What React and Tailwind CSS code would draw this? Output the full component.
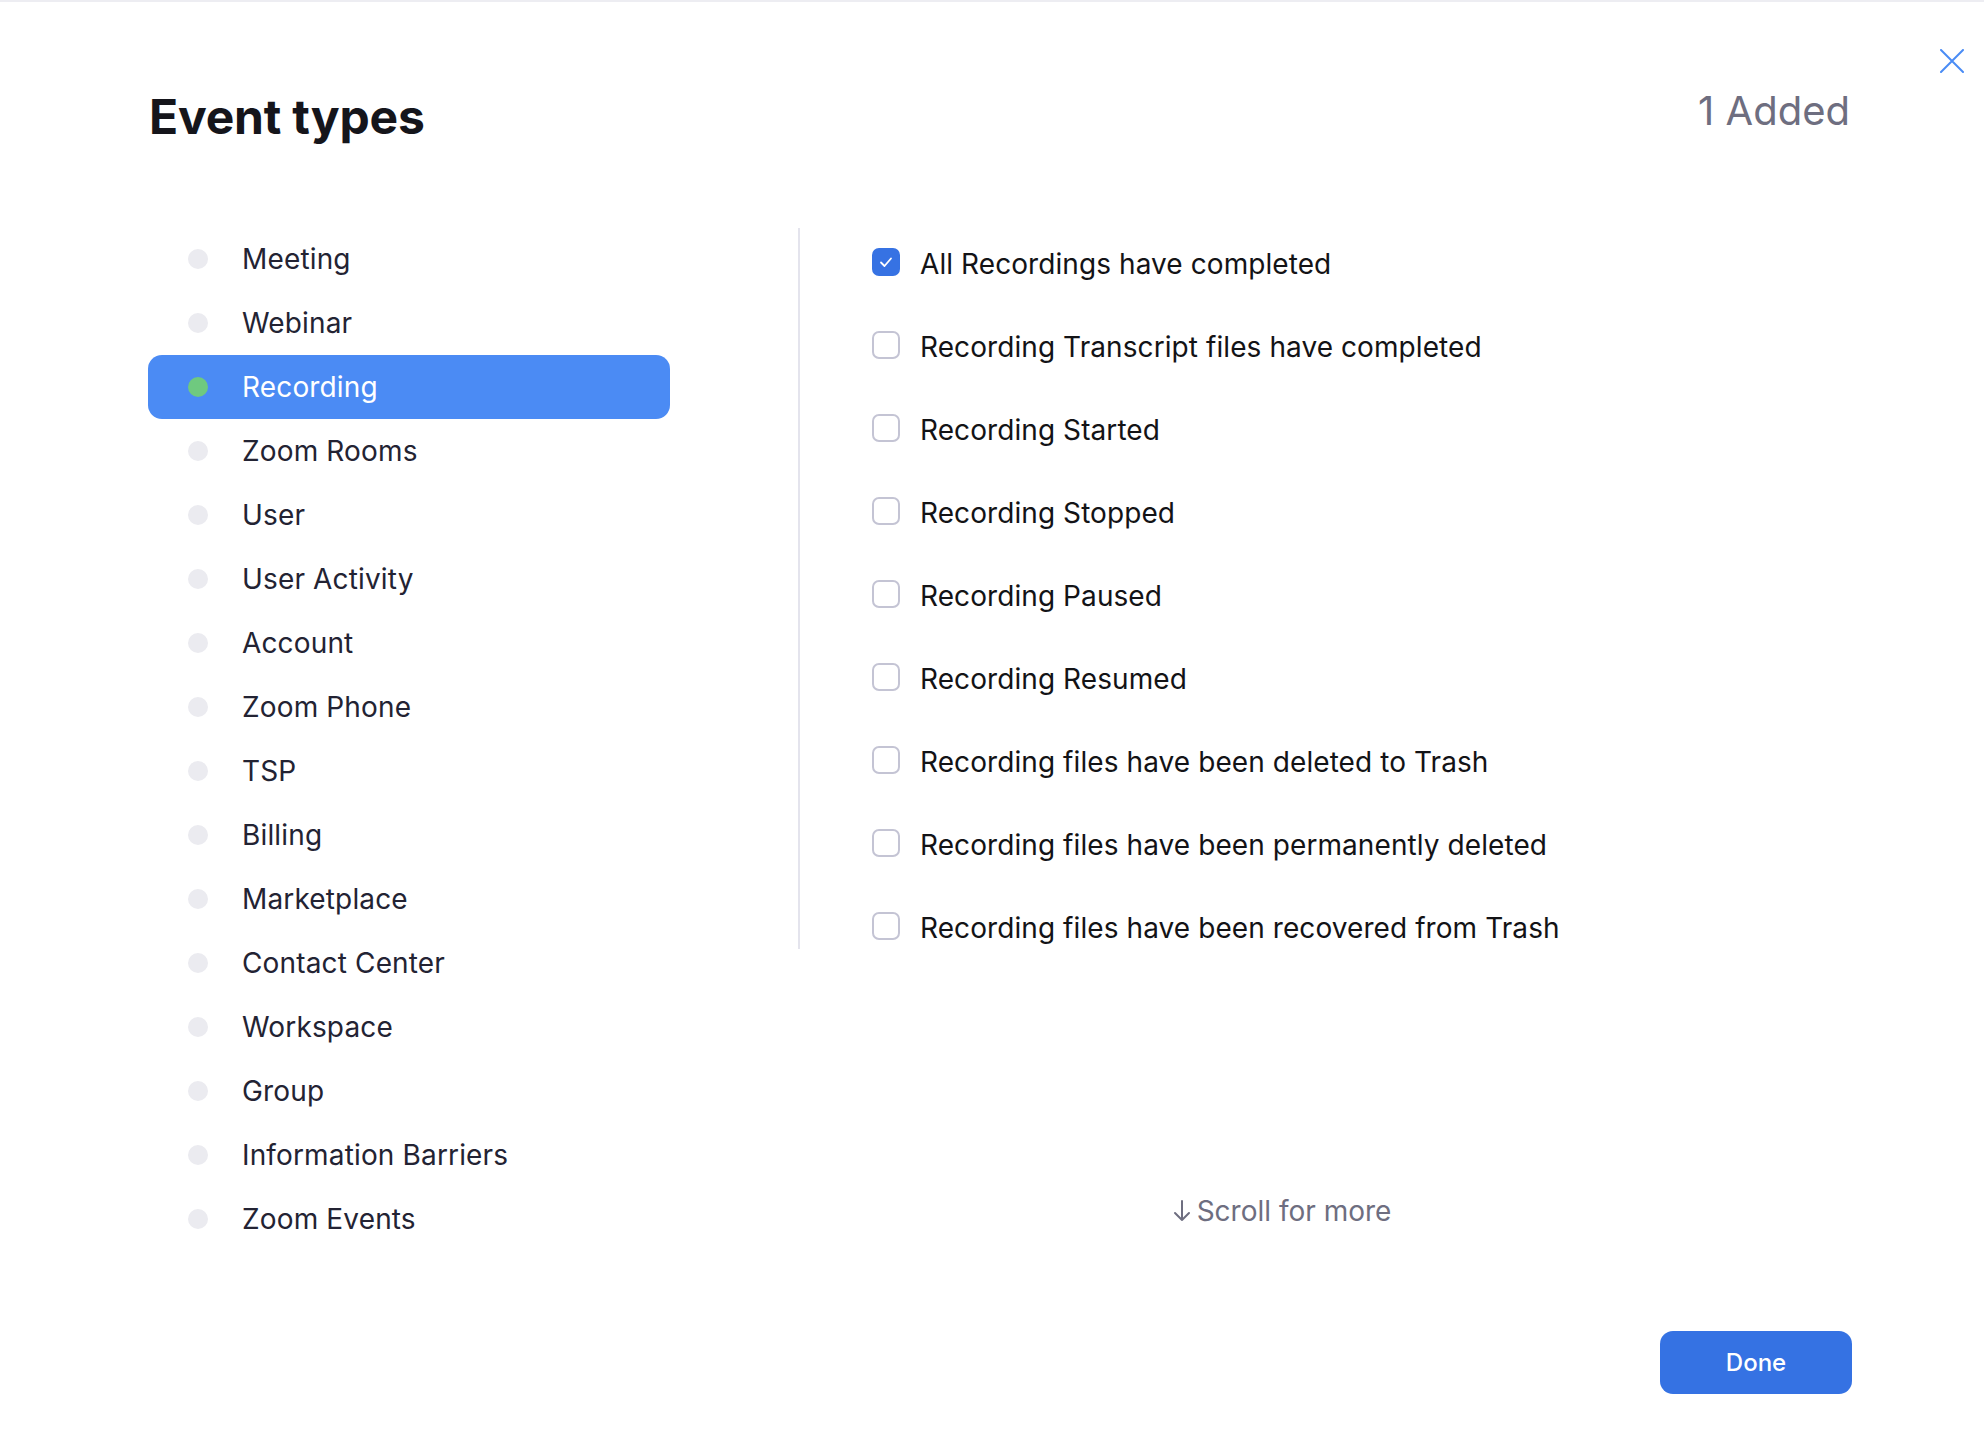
import { useState } from 'react';

const categories = [
  'Meeting',
  'Webinar',
  'Recording',
  'Zoom Rooms',
  'User',
  'User Activity',
  'Account',
  'Zoom Phone',
  'TSP',
  'Billing',
  'Marketplace',
  'Contact Center',
  'Workspace',
  'Group',
  'Information Barriers',
  'Zoom Events',
];

const recordingEvents = [
  'All Recordings have completed',
  'Recording Transcript files have completed',
  'Recording Started',
  'Recording Stopped',
  'Recording Paused',
  'Recording Resumed',
  'Recording files have been deleted to Trash',
  'Recording files have been permanently deleted',
  'Recording files have been recovered from Trash',
];

const Checkbox = ({ checked }) =>
  checked ? (
    <span className="w-[28px] h-[28px] rounded-[7px] bg-[#3672e3] flex items-center justify-center shrink-0">
      <svg width="16" height="16" viewBox="0 0 16 16" fill="none">
        <path d="M3 8.5L6.5 12L13 4.5" stroke="white" strokeWidth="1.8" strokeLinecap="round" strokeLinejoin="round" />
      </svg>
    </span>
  ) : (
    <span className="w-[28px] h-[28px] rounded-[7px] border-2 border-[#c4c4d4] bg-white shrink-0" />
  );

const App = () => {
  const [active, setActive] = useState('Recording');
  const [checked, setChecked] = useState({ 'All Recordings have completed': true });

  return (
    <div className="relative w-[1984px] h-[1430px] bg-white border-t-2 border-[#ededf2] font-[Inter,sans-serif] overflow-hidden">
      {/* close */}
      <button className="absolute top-[47px] left-[1940px] w-[24px] h-[24px]">
        <svg width="24" height="24" viewBox="0 0 24 24" fill="none">
          <path d="M1 1L23 23M23 1L1 23" stroke="#4a8cf5" strokeWidth="2" strokeLinecap="round" />
        </svg>
      </button>

      {/* header */}
      <div className="flex items-start justify-between pl-[149px] pr-[134px] pt-[90px]">
        <h1 className="text-[48px] leading-[48px] font-bold text-[#15151b] tracking-[-0.2px] mt-[1px]">Event types</h1>
        <span className="text-[40px] leading-[40px] text-[#6e6e80] mt-[-1px]">1 Added</span>
      </div>

      {/* body */}
      <div className="flex mt-[79px] pl-[148px]">
        <ul className="w-[522px] mt-[7px]">
          {categories.map((c) => {
            const on = c === active;
            return (
              <li key={c}>
                <button
                  onClick={() => setActive(c)}
                  className={`w-full h-[64px] flex items-center pl-[40px] rounded-[14px] text-left ${on ? 'bg-[#4b8bf4]' : ''}`}
                >
                  <span className={`w-[20px] h-[20px] rounded-full shrink-0 ${on ? 'bg-[#6fc97f]' : 'bg-[#ebebf0]'}`} />
                  <span className={`ml-[34px] text-[28px] leading-none tracking-[0.15px] ${on ? 'text-white' : 'text-[#232333]'}`}>{c}</span>
                </button>
              </li>
            );
          })}
        </ul>

        <div className="ml-[128px] mt-[8px] w-[2px] h-[721px] bg-[#e4e4ed]" />

        <div className="w-[960px] flex flex-col">
          <div className="pl-[72px]">
            {recordingEvents.map((ev) => (
              <label
                key={ev}
                onClick={() => setChecked({ ...checked, [ev]: !checked[ev] })}
                className="h-[83px] flex items-center gap-[20px] cursor-pointer"
              >
                <Checkbox checked={!!checked[ev]} />
                <span className="mt-[4px] text-[28px] leading-none tracking-[0.08px] text-[#131316]">{ev}</span>
              </label>
            ))}
          </div>
          <div className="mt-[230px] flex items-center justify-center gap-[6px] pl-[4px] text-[#6e6e80]">
            <svg width="18" height="22" viewBox="0 0 18 22" fill="none">
              <path d="M9 1V20M2 13L9 20L16 13" stroke="#6e6e80" strokeWidth="2" strokeLinecap="round" strokeLinejoin="round" />
            </svg>
            <span className="text-[28px] leading-none">Scroll for more</span>
          </div>
        </div>
      </div>

      {/* footer */}
      <div className="flex justify-end pr-[132px] mt-[80px]">
        <button className="w-[192px] h-[63px] rounded-[13px] bg-[#3572e3] text-white text-[24px] font-medium">Done</button>
      </div>
    </div>
  );
};

export default App;
